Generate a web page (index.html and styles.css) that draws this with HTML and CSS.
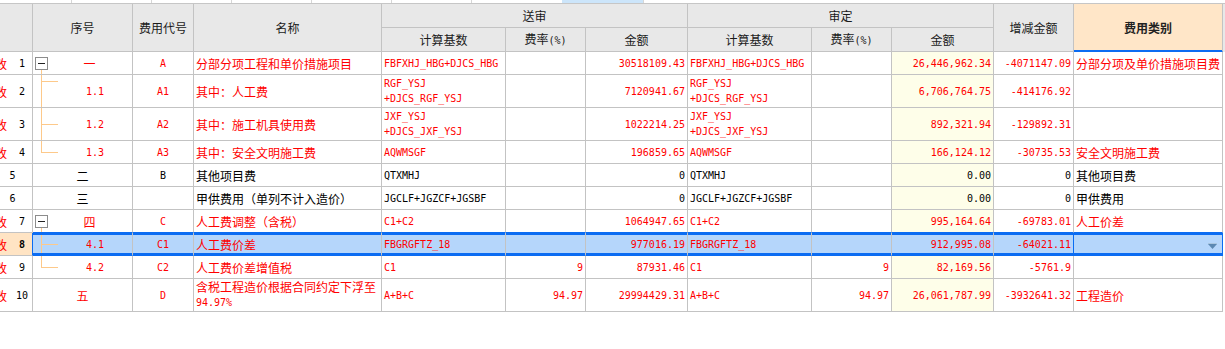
FILE: index.html
```html
<!DOCTYPE html>
<html lang="zh">
<head>
<meta charset="utf-8">
<title>费用汇总</title>
<link rel="stylesheet" href="styles.css">
</head>
<body>
<div class="strip">
  <span class="s1"></span><span class="s2"></span><span class="s2"></span><span class="s2"></span><span class="s2"></span><span class="s2"></span><span class="s3"></span><span class="s4"></span><span class="s5"></span>
</div>
<table class="grid">
  <colgroup>
    <col style="width:33px"><col style="width:100px"><col style="width:61px"><col style="width:188px"><col style="width:124px"><col style="width:80px"><col style="width:102px"><col style="width:124px"><col style="width:80px"><col style="width:102px"><col style="width:80px"><col style="width:149px"><col style="width:2px">
  </colgroup>
  <thead>
    <tr>
      <th rowspan="2" class="c0"></th>
      <th rowspan="2">序号</th>
      <th rowspan="2">费用代号</th>
      <th rowspan="2">名称</th>
      <th colspan="3">送审</th>
      <th colspan="3">审定</th>
      <th rowspan="2">增减金额</th>
      <th rowspan="2" class="cat">费用类别</th>
      <th rowspan="2" class="fill"></th>
    </tr>
    <tr>
      <th>计算基数</th><th>费率<span class="m">(%)</span></th><th>金额</th>
      <th>计算基数</th><th>费率<span class="m">(%)</span></th><th>金额</th>
    </tr>
  </thead>
  <tbody>
    <tr class="r red">
      <td class="c0"><div class="rn"><span class="gai">改</span><span class="n m">1</span></div></td>
      <td class="tp"><div class="node"><span class="box"></span><span class="lbl">一</span></div></td>
      <td class="code m">A</td>
      <td class="name">分部分项工程和单价措施项目</td>
      <td class="m">FBFXHJ_HBG+DJCS_HBG</td>
      <td class="num m"></td>
      <td class="num m">30518109.43</td>
      <td class="m">FBFXHJ_HBG+DJCS_HBG</td>
      <td class="num m"></td>
      <td class="num m y">26,446,962.34</td>
      <td class="num m">-4071147.09</td>
      <td class="name">分部分项及单价措施项目费</td>
      <td class="fill"></td>
    </tr>
    <tr class="t red">
      <td class="c0"><div class="rn"><span class="gai">改</span><span class="n m">2</span></div></td>
      <td class="tc hi m">1.1</td>
      <td class="code m">A1</td>
      <td class="name">其中：人工费</td>
      <td class="m">RGF_YSJ<br>+DJCS_RGF_YSJ</td>
      <td class="num m"></td>
      <td class="num m">7120941.67</td>
      <td class="m">RGF_YSJ<br>+DJCS_RGF_YSJ</td>
      <td class="num m"></td>
      <td class="num m y">6,706,764.75</td>
      <td class="num m">-414176.92</td>
      <td class="name"></td>
      <td class="fill"></td>
    </tr>
    <tr class="t red">
      <td class="c0"><div class="rn"><span class="gai">改</span><span class="n m">3</span></div></td>
      <td class="tc m">1.2</td>
      <td class="code m">A2</td>
      <td class="name">其中：施工机具使用费</td>
      <td class="m">JXF_YSJ<br>+DJCS_JXF_YSJ</td>
      <td class="num m"></td>
      <td class="num m">1022214.25</td>
      <td class="m">JXF_YSJ<br>+DJCS_JXF_YSJ</td>
      <td class="num m"></td>
      <td class="num m y">892,321.94</td>
      <td class="num m">-129892.31</td>
      <td class="name"></td>
      <td class="fill"></td>
    </tr>
    <tr class="r red">
      <td class="c0"><div class="rn"><span class="gai">改</span><span class="n m">4</span></div></td>
      <td class="tl m">1.3</td>
      <td class="code m">A3</td>
      <td class="name">其中：安全文明施工费</td>
      <td class="m">AQWMSGF</td>
      <td class="num m"></td>
      <td class="num m">196859.65</td>
      <td class="m">AQWMSGF</td>
      <td class="num m"></td>
      <td class="num m y">166,124.12</td>
      <td class="num m">-30735.53</td>
      <td class="name">安全文明施工费</td>
      <td class="fill"></td>
    </tr>
    <tr class="r">
      <td class="c0"><div class="rn"><span class="n solo m">5</span></div></td>
      <td class="seq">二</td>
      <td class="code m">B</td>
      <td class="name">其他项目费</td>
      <td class="m">QTXMHJ</td>
      <td class="num m"></td>
      <td class="num m">0</td>
      <td class="m">QTXMHJ</td>
      <td class="num m"></td>
      <td class="num m y">0.00</td>
      <td class="num m">0</td>
      <td class="name">其他项目费</td>
      <td class="fill"></td>
    </tr>
    <tr class="r">
      <td class="c0"><div class="rn"><span class="n solo m">6</span></div></td>
      <td class="seq">三</td>
      <td class="code m"></td>
      <td class="name">甲供费用（单列不计入造价）</td>
      <td class="m">JGCLF+JGZCF+JGSBF</td>
      <td class="num m"></td>
      <td class="num m">0</td>
      <td class="m">JGCLF+JGZCF+JGSBF</td>
      <td class="num m"></td>
      <td class="num m y">0.00</td>
      <td class="num m">0</td>
      <td class="name">甲供费用</td>
      <td class="fill"></td>
    </tr>
    <tr class="r red pre">
      <td class="c0"><div class="rn"><span class="gai">改</span><span class="n m">7</span></div></td>
      <td class="tp"><div class="node"><span class="box"></span><span class="lbl">四</span></div></td>
      <td class="code m">C</td>
      <td class="name">人工费调整（含税）</td>
      <td class="m">C1+C2</td>
      <td class="num m"></td>
      <td class="num m">1064947.65</td>
      <td class="m">C1+C2</td>
      <td class="num m"></td>
      <td class="num m y">995,164.64</td>
      <td class="num m">-69783.01</td>
      <td class="name">人工价差</td>
      <td class="fill"></td>
    </tr>
    <tr class="r red sel">
      <td class="c0"><div class="rn"><span class="gai">改</span><span class="n m b">8</span></div></td>
      <td class="tc first m">4.1</td>
      <td class="code m">C1</td>
      <td class="name">人工费价差</td>
      <td class="m">FBGRGFTZ_18</td>
      <td class="num m"></td>
      <td class="num m">977016.19</td>
      <td class="m">FBGRGFTZ_18</td>
      <td class="num m"></td>
      <td class="num m y">912,995.08</td>
      <td class="num m dz">-64021.11</td>
      <td class="edit"><svg class="dd" width="9" height="6" viewBox="0 0 9 6"><rect x="0" y="0" width="9" height="1" fill="#a9c6e0"/><polygon points="0,1 9,1 4.5,6" fill="#5b88b2"/></svg></td>
      <td class="fill"></td>
    </tr>
    <tr class="r red">
      <td class="c0"><div class="rn"><span class="gai">改</span><span class="n m">9</span></div></td>
      <td class="tl m">4.2</td>
      <td class="code m">C2</td>
      <td class="name">人工费价差增值税</td>
      <td class="m">C1</td>
      <td class="num m">9</td>
      <td class="num m">87931.46</td>
      <td class="m">C1</td>
      <td class="num m">9</td>
      <td class="num m y">82,169.56</td>
      <td class="num m">-5761.9</td>
      <td class="name"></td>
      <td class="fill"></td>
    </tr>
    <tr class="t red">
      <td class="c0"><div class="rn"><span class="gai">改</span><span class="n m">10</span></div></td>
      <td class="seq">五</td>
      <td class="code m">D</td>
      <td class="name two">含税工程造价根据合同约定下浮至<br><span class="m">94.97%</span></td>
      <td class="m">A+B+C</td>
      <td class="num m">94.97</td>
      <td class="num m">29994429.31</td>
      <td class="m">A+B+C</td>
      <td class="num m">94.97</td>
      <td class="num m y">26,061,787.99</td>
      <td class="num m">-3932641.32</td>
      <td class="name">工程造价</td>
      <td class="fill"></td>
    </tr>
  </tbody>
</table>
</body>
</html>
```

FILE: styles.css
```css
* { box-sizing: border-box; }

:root {
  --grid: #c3c3c3;
  --sel: #0b6cf2;
  --tree: #fdc98a;
}

body {
  margin: 0;
  background: #fff;
  font-family: "Noto Sans CJK SC", "Noto Sans", sans-serif;
  font-size: 12px;
  color: #000;
}

/* top strip (partially visible tab/ruler bar) */
.strip {
  display: flex;
  height: 4px;
  border-bottom: 1px solid #c6c6c6;
  background: #fff;
}
.strip span { flex: none; height: 3px; }
.strip .s1 { width: 72px; border-right: 1px solid #d6d6d6; }
.strip .s2 { width: 80px; border-right: 1px solid #d6d6d6; }
.strip .s3 { width: 90px; }
.strip .s4 { width: 81px; background: #cce5fa; }
.strip .s5 { flex: 1; border-left: 1px solid #d6d6d6; }

/* grid */
.grid {
  border-collapse: separate;
  border-spacing: 0;
  table-layout: fixed;
  width: 1225px;
}
.grid th,
.grid td {
  border-right: 1px solid var(--grid);
  border-bottom: 1px solid var(--grid);
  padding: 0 2px;
  white-space: nowrap;
  overflow: hidden;
  line-height: 15px;
  vertical-align: middle;
}
.grid thead tr { height: 24px; }
.grid th {
  background: #e8e8e8;
  font-weight: normal;
  color: #1a1a1a;
  text-align: center;
}
.grid th.cat {
  background: #ffe6c8;
  font-weight: bold;
  color: #222;
  border-bottom-color: var(--sel);
  box-shadow: inset 0 -1px 0 var(--sel);
}
.grid th.fill { border-right: none; border-bottom: none; }
.grid td.fill { border-right: none; border-bottom: none; background: #fff; }

.grid tr.r { height: 23px; }
.grid tr.t { height: 33px; }

.m {
  font-family: "DejaVu Sans Mono", "Liberation Mono", monospace;
  font-size: 10px;
}
.red td { color: #ff0000; }
.num { text-align: right; }
.code { text-align: center; }
.seq { text-align: center; }
.name { padding-left: 3px; }
.name.two { line-height: 14px; }
.y { background: #fefee9; }

/* row number column */
.grid .c0 { padding: 0; }
.rn { display: flex; align-items: center; }
.gai { flex: none; width: 12px; margin-left: -5px; color: #ff0000; }
.rn .n { flex: 1; text-align: center; padding-left: 5px; color: #000; }
.rn .n.solo { padding-left: 0; padding-right: 7px; }
.rn .b { font-weight: bold; }

/* tree column */
.node { display: flex; align-items: center; }
.box {
  flex: none;
  width: 13px;
  height: 13px;
  border: 1px solid #8c8c8c;
  background: #fff linear-gradient(#222, #222) no-repeat center / 7px 1px;
}
.lbl { flex: 1; text-align: center; padding-left: 1px; }
.tp {
  background: linear-gradient(var(--tree), var(--tree)) no-repeat 8px 100% / 1px 6px;
}
.tc, .tl {
  text-align: center;
  padding-left: 27px !important;
}
.tc {
  background:
    linear-gradient(var(--tree), var(--tree)) no-repeat 8px 0 / 1px 100%,
    linear-gradient(var(--tree), var(--tree)) no-repeat 8px 50% / 17px 1px;
}
.tc.hi { background-position: 8px 0, 8px 6px; }
.tl {
  background:
    linear-gradient(var(--tree), var(--tree)) no-repeat 8px 0 / 1px 50%,
    linear-gradient(var(--tree), var(--tree)) no-repeat 8px 50% / 17px 1px;
}

/* selection */
.pre td:not(.c0):not(.fill) { border-bottom-color: var(--sel); }
.sel td:not(.c0):not(.fill) {
  background-color: #b5d6fb;
  border-bottom-color: var(--sel);
  box-shadow: inset 0 2px 0 var(--sel), inset 0 -2px 0 var(--sel);
}
.sel td.c0 { background: #ffe4c4; border-right-color: var(--sel); }
.sel td.first {
  box-shadow: inset 2px 0 0 var(--sel), inset 0 2px 0 var(--sel), inset 0 -2px 0 var(--sel);
}
.sel td.y { background-color: #b4d3ea; }
.sel td.dz { border-right-color: var(--sel); }
.sel td.edit {
  background: #fff;
  border-right-color: var(--sel);
  box-shadow: inset 0 0 0 2px var(--sel);
  text-align: right;
  padding-right: 5px;
}
.dd { display: inline-block; vertical-align: middle; }
```
